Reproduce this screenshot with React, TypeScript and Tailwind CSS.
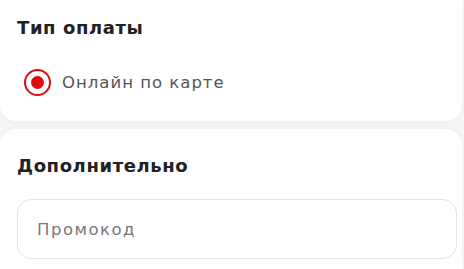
import React from 'react';

export default function App() {
  return (
    <div className="w-[464px] h-[269px] overflow-hidden bg-[#f6f6f6] font-['DejaVu_Sans',sans-serif]">
      <div className="flex flex-col gap-2 pr-[2px]">
        {/* Payment type */}
        <section className="bg-white rounded-b-2xl shadow-[0_2px_6px_rgba(0,0,0,0.03)] px-[17px] pt-[16px] pb-[25px]">
          <h2 className="text-[18px] font-bold text-[#222] leading-6 tracking-[0.6px]">Тип оплаты</h2>
          <label className="mt-[29px] flex items-center gap-[11px] pl-[7px]">
            <span className="w-[27px] h-[27px] rounded-full border-[2.5px] border-[#e20a0a] flex items-center justify-center">
              <span className="w-[13px] h-[13px] rounded-full bg-[#e20a0a]" />
            </span>
            <span className="text-[16.5px] text-[#555] leading-6 tracking-[1px]">Онлайн по карте</span>
          </label>
        </section>

        {/* Extra */}
        <section className="bg-white rounded-t-2xl shadow-[0_-2px_6px_rgba(0,0,0,0.03)] pl-[17px] pt-[25px] pb-6 h-[140px]">
          <h2 className="text-[18px] font-bold text-[#222] leading-6 tracking-[0.6px]">Дополнительно</h2>
          <input
            placeholder="Промокод"
            className="mt-[21px] w-[440px] h-[60px] rounded-[14px] border border-[#e3e3e3] px-[19px] text-[16.5px] tracking-[1.5px] text-[#333] placeholder:text-[#777] outline-none"
          />
        </section>
      </div>
    </div>
  );
}
